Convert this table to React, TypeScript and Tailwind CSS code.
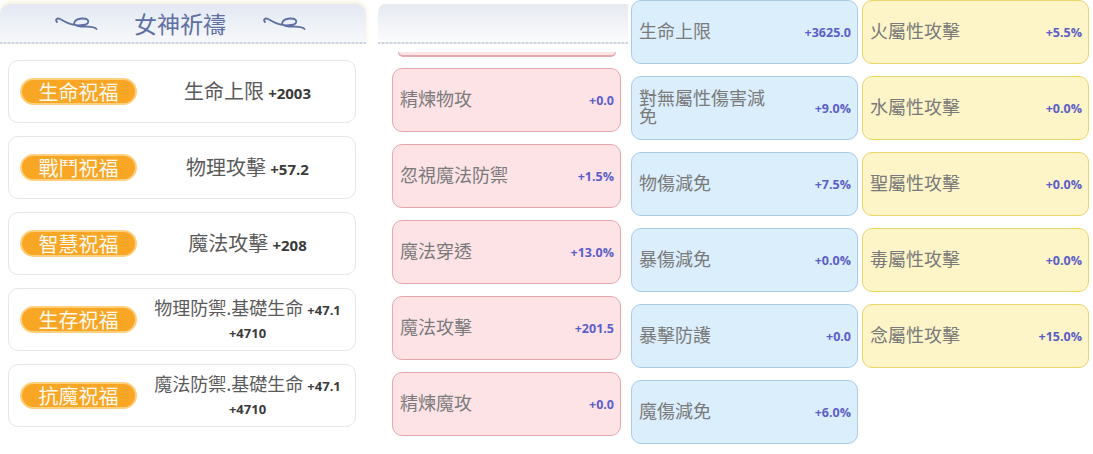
import React from 'react';

// ─── Data ─────────────────────────────────────────────────────────────────────

type Blessing = { badge: string; label: string; values: string[]; multi?: boolean };

const BLESSINGS: Blessing[] = [
  { badge: '生命祝福', label: '生命上限', values: ['+2003'] },
  { badge: '戰鬥祝福', label: '物理攻擊', values: ['+57.2'] },
  { badge: '智慧祝福', label: '魔法攻擊', values: ['+208'] },
  { badge: '生存祝福', label: '物理防禦.基礎生命', values: ['+47.1', '+4710'], multi: true },
  { badge: '抗魔祝福', label: '魔法防禦.基礎生命', values: ['+47.1', '+4710'], multi: true },
];

type Stat = { label: string; value: string };

const PINK: Stat[] = [
  { label: '精煉物攻', value: '+0.0' },
  { label: '忽視魔法防禦', value: '+1.5%' },
  { label: '魔法穿透', value: '+13.0%' },
  { label: '魔法攻擊', value: '+201.5' },
  { label: '精煉魔攻', value: '+0.0' },
];

const BLUE: Stat[] = [
  { label: '生命上限', value: '+3625.0' },
  { label: '對無屬性傷害減免', value: '+9.0%' },
  { label: '物傷減免', value: '+7.5%' },
  { label: '暴傷減免', value: '+0.0%' },
  { label: '暴擊防護', value: '+0.0' },
  { label: '魔傷減免', value: '+6.0%' },
];

const YELLOW: Stat[] = [
  { label: '火屬性攻擊', value: '+5.5%' },
  { label: '水屬性攻擊', value: '+0.0%' },
  { label: '聖屬性攻擊', value: '+0.0%' },
  { label: '毒屬性攻擊', value: '+0.0%' },
  { label: '念屬性攻擊', value: '+15.0%' },
];

const CJK = "font-['Noto_Sans_CJK_TC','Noto_Sans',sans-serif]";
const NUM = "font-['Open_Sans','Noto_Sans',sans-serif]";

// ─── Swirl ornament ───────────────────────────────────────────────────────────

function Swirl() {
  return (
    <svg width="46" height="14" viewBox="0 0 46 14" fill="none">
      <path
        d="M4 6 C2 4 4 1.5 7 3 C13 6.5 20 10.5 30 9 C37 8 37 2.5 30 2.5 C22 2.5 16 9.5 28 10.5 C36 11 41 10 43.5 13"
        stroke="#5e6fa3"
        strokeWidth="1.8"
        strokeLinecap="round"
      />
    </svg>
  );
}

// ─── Left panel ───────────────────────────────────────────────────────────────

function BlessingCard({ item }: { item: Blessing }) {
  return (
    <div className="flex h-[63px] items-center rounded-[10px] border-[1.5px] border-[#e6e6e6] bg-white pl-[11px] pr-[6px]">
      <span
        className={`flex h-[27px] w-[117px] shrink-0 items-center justify-center rounded-full border-2 border-[#fcd07e] bg-[#f9a624] text-[20px] leading-none text-[#fff8ec] ${CJK}`}
      >
        {item.badge}
      </span>
      <div className="flex flex-1 justify-center pl-[8px]">
        <p className={`w-[205px] text-center ${item.multi ? 'leading-[22px]' : 'leading-[26px]'}`}>
          <span className={`${item.multi ? 'text-[18px]' : 'text-[20px]'} text-[#5a5a5a] ${CJK}`}>{item.label}</span>
          {item.values.map(v => (
            <React.Fragment key={v}>
              {' '}
              <span className={`${item.multi ? 'text-[13px]' : 'text-[15px]'} font-bold text-[#3a3a3a] ${NUM}`}>{v}</span>
            </React.Fragment>
          ))}
        </p>
      </div>
    </div>
  );
}

function LeftPanel() {
  return (
    <div className="w-[366px] shrink-0">
      <div className="mt-[4px] flex h-[40px] items-center justify-center gap-[35px] rounded-t-[10px] border-b-2 border-dotted border-[#cfd2da] bg-gradient-to-b from-[#e3e8f2] to-[#f6f8fb] pr-[6px] shadow-[0_-2px_4px_rgba(236,226,190,0.6)]">
        <Swirl />
        <span className={`text-[23px] leading-none text-[#5e6fa3] ${CJK}`}>女神祈禱</span>
        <Swirl />
      </div>
      <div className="mt-[16px] flex flex-col gap-[13px] pl-[8px] pr-[10px]">
        {BLESSINGS.map(b => (
          <BlessingCard key={b.badge} item={b} />
        ))}
      </div>
    </div>
  );
}

// ─── Stat cards ───────────────────────────────────────────────────────────────

function StatCard({ stat, tone }: { stat: Stat; tone: string }) {
  return (
    <div className={`flex h-[64px] items-center justify-between rounded-[10px] border-[1.5px] pl-[7px] pr-[6px] ${tone}`}>
      <span className={`-mt-[4px] w-[130px] text-[18px] leading-[18px] text-[#7a7a7a] ${CJK}`}>{stat.label}</span>
      <span className={`mt-[2px] text-[12.5px] font-bold text-[#5b5ec9] ${NUM}`}>{stat.value}</span>
    </div>
  );
}

function MiddlePanel() {
  return (
    <div className="ml-[12px] w-[250px] shrink-0">
      <div className="mt-[4px] h-[40px] rounded-tl-[8px] border-b-2 border-dotted border-[#cfd2da] bg-gradient-to-b from-[#e6eaf1] to-[#fbfcfd]" />
      {/* bottom edge of a card scrolled out of view */}
      <div className="ml-[20px] mr-[12px] mt-[8px] h-[5px] rounded-b-[8px] border-x-[1.5px] border-b-2 border-[#e7a9b0] bg-[#fde4e7]" />
      <div className="ml-[14px] mt-[11px] flex w-[229px] flex-col gap-[12px]">
        {PINK.map(s => (
          <StatCard key={s.label} stat={s} tone="border-[#e7a5ad] bg-[#fde3e6]" />
        ))}
      </div>
    </div>
  );
}

// ─── App ──────────────────────────────────────────────────────────────────────

export default function App() {
  return (
    <div className="flex h-[454px] w-[1093px] overflow-hidden bg-white">
      <LeftPanel />
      <MiddlePanel />
      <div className="ml-[3px] flex w-[227px] shrink-0 flex-col gap-[12px]">
        {BLUE.map(s => (
          <StatCard key={s.label} stat={s} tone="border-[#a9cbe6] bg-[#dbeefc]" />
        ))}
      </div>
      <div className="ml-[4px] flex w-[227px] shrink-0 flex-col gap-[12px]">
        {YELLOW.map(s => (
          <StatCard key={s.label} stat={s} tone="border-[#e9d66c] bg-[#fdf4c8]" />
        ))}
      </div>
    </div>
  );
}
